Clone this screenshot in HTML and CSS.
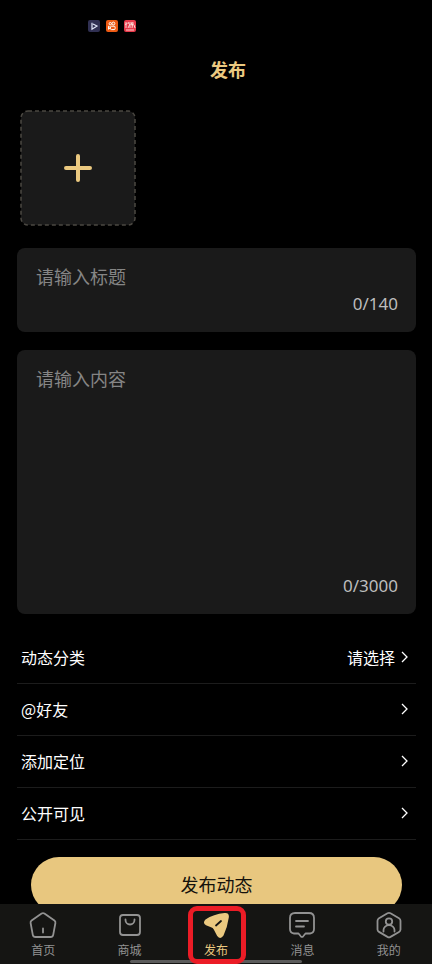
FILE: index.html
```html
<!DOCTYPE html>
<html lang="zh-CN">
<head>
<meta charset="utf-8">
<meta name="viewport" content="width=device-width, initial-scale=1">
<title>发布</title>
<link rel="stylesheet" href="styles.css">
</head>
<body>
<div class="status" aria-hidden="true">
  <svg class="app" viewBox="0 0 12 12"><rect width="12" height="12" rx="2" fill="#303052"/><path d="M4 2.8v6.4l5-3.2-4-2" fill="none" stroke="#dfe4f6" stroke-width="1.2"/></svg>
  <svg class="app" viewBox="0 0 12 12"><rect width="12" height="12" rx="2" fill="#ee5a13"/><g fill="none" stroke="#fff"><circle cx="4.3" cy="3.7" r="1.2"/><circle cx="7.4" cy="3.5" r="1.4"/><rect x="4.5" y="6.2" width="4.6" height="3.4" rx="1"/><path d="M2.5 6.2l2 1.6-2 1.5z"/></g></svg>
  <svg class="app" viewBox="0 0 12 12"><rect width="12" height="12" rx="2" fill="#e8394a"/><path d="M2 2v6M1 4.500l2.500-1M4 2l1 2M4 8l2-4M6 2v6M8 2l-1 3 3-1M9 2l-1 6M10 5l1 3M2 10h8" fill="none" stroke="#fde3df" stroke-width=".9"/></svg>
</div>
<header class="header"><h1 class="title">发布</h1></header>
<main class="main">
  <button class="upload" type="button" aria-label="+">
    <svg class="frame" viewBox="0 0 116 116"><rect x="1" y="1" width="114" height="114" rx="7" fill="#1a1a1a" stroke="#4b4842" stroke-width="1.500" stroke-dasharray="4 3"/><path d="M58 46v24M46 58h24" stroke="#ebc980" stroke-width="4" stroke-linecap="round"/></svg>
  </button>
  <label class="field">
    <input class="entry" type="text" maxlength="140" placeholder="请输入标题">
    <span class="count">0/140</span>
  </label>
  <label class="field field-tall">
    <textarea class="entry" maxlength="3000" placeholder="请输入内容"></textarea>
    <span class="count">0/3000</span>
  </label>
  <div class="options">
    <button class="option" type="button"><span class="name">动态分类</span><span>请选择</span><svg class="chevron" viewBox="0 0 8 12"><path d="M2 1l5 5-5 5"/></svg></button>
    <button class="option" type="button"><span class="name">@好友</span><svg class="chevron" viewBox="0 0 8 12"><path d="M2 1l5 5-5 5"/></svg></button>
    <button class="option" type="button"><span class="name">添加定位</span><svg class="chevron" viewBox="0 0 8 12"><path d="M2 1l5 5-5 5"/></svg></button>
    <button class="option" type="button"><span class="name">公开可见</span><svg class="chevron" viewBox="0 0 8 12"><path d="M2 1l5 5-5 5"/></svg></button>
  </div>
  <button class="submit" type="button">发布动态</button>
</main>
<nav class="tabs">
  <a class="tab" href="#home">
    <svg class="icon" viewBox="0 0 28 28"><path d="M12.600 2.500q1.400-.9 2.800 0l10 7q1.300 1 1 2.500l-2.200 11.800q-.4 2.200-2.600 2.200H6.400q-2.200 0-2.600-2.200L1.600 12q-.3-1.500 1-2.500zM14 17.500v4"/></svg>
    <span>首页</span>
  </a>
  <a class="tab" href="#shop">
    <svg class="icon" viewBox="0 0 28 28"><rect x="4" y="4" width="20" height="20" rx="3"/><path d="M9.500 8.500v.5a4.500 4.500 0 0 0 9 0v-.5"/></svg>
    <span>商城</span>
  </a>
  <a class="tab tab-active" href="#publish" aria-current="page">
    <svg class="icon" viewBox="0 0 28 28"><path class="plane" d="M22.500 2Q27.500 1.500 26.800 6.500Q25.500 16 21.500 24.500Q18.500 29 15.200 25L11.800 18.500Q11 16.800 9 16.200L4 14.300Q.2 11.800 3.500 8.500Q11.500 3.200 22.500 2Z"/><path class="fold" d="M14 14.500l5-4.500"/></svg>
    <span>发布</span>
  </a>
  <a class="tab" href="#messages">
    <svg class="icon" viewBox="0 0 28 28"><path d="M7 2h14q5 0 5 5v11q0 4-4 4.500h-4.500l-2.300 2.800q-1.200 1.200-2.400 0l-2.300-2.800H6Q2 22 2 18V7q0-5 5-5zM8 10h12M8 15.500h8"/></svg>
    <span>消息</span>
  </a>
  <a class="tab" href="#me">
    <svg class="icon" viewBox="0 0 28 28"><path d="M12.500 2.300q1.500-.8 3 0l8.500 5q1.500.9 1.500 2.500v8.600q0 1.600-1.500 2.500l-8.500 5q-1.500.8-3 0l-8.500-5q-1.500-.9-1.500-2.500V9.800q0-1.600 1.500-2.500zM8.500 20.500v-1.400a5.500 5 0 0 1 11 0v1.400"/><circle cx="14" cy="10.500" r="3.200"/></svg>
    <span>我的</span>
  </a>
</nav>
</body>
</html>
```
FILE: styles.css
```css
* {
  box-sizing: border-box;
}

body {
  display: flex;
  flex-direction: column;
  height: 100vh;
  margin: 0;
  background: #000;
  color: #fff;
  font: 16px/24px "Noto Sans CJK SC", sans-serif;
}

button,
input,
textarea {
  margin: 0;
  padding: 0;
  border: 0;
  background: none;
  color: inherit;
  font: inherit;
}

.status {
  display: flex;
  gap: 6px;
  padding: 20px 88px 0;
}

.app {
  width: 12px;
  height: 12px;
}

.header {
  padding: 24px 0 28px 24px;
}

.title {
  margin: 0;
  color: #ebc980;
  font-size: 18px;
  line-height: 26px;
  text-align: center;
}

.main {
  flex: 1;
  min-height: 0;
  padding: 0 16px 0 17px;
  overflow-y: auto;
  scrollbar-width: none;
}

.upload {
  display: block;
  margin: 0 3px 22px;
}

.frame {
  display: block;
  width: 116px;
  height: 116px;
}

.field {
  display: flex;
  flex-direction: column;
  min-height: 84px;
  margin-bottom: 18px;
  padding: 15px 18px 16px 19px;
  border-radius: 8px;
  background: #1a1a1a;
}

.field-tall {
  min-height: 264px;
}

.entry {
  flex: 1;
  width: 100%;
  font-size: 18px;
  line-height: 26px;
  outline: none;
  resize: none;
}

.entry::placeholder {
  color: #858585;
}

input.entry {
  flex: none;
  height: 26px;
}

.count {
  align-self: flex-end;
  margin-top: auto;
  color: #bdbdbd;
  font-family: "Noto Sans", sans-serif;
  font-size: 17px;
}

.option {
  display: flex;
  align-items: center;
  gap: 5px;
  width: 100%;
  height: 52px;
  padding: 0 8px 2px 4px;
  border-bottom: 1px solid #1c1c1c;
  text-align: left;
}

.name {
  flex: 1;
}

.chevron {
  width: 8px;
  height: 12px;
  fill: none;
  stroke: #fff;
  stroke-width: 1.3;
}

.submit {
  display: block;
  width: calc(100% - 28px);
  height: 56px;
  margin: 17px 14px 0;
  padding-bottom: 2px;
  border-radius: 28px;
  background: #e8c77f;
  color: #15120c;
  font-size: 18px;
}

.tabs {
  position: relative;
  display: flex;
  height: 60px;
  background: #151513;
}

.tabs::before {
  content: "";
  position: absolute;
  bottom: 1px;
  left: 30%;
  width: 40%;
  height: 3px;
  border-radius: 2px;
  background: #5c5c5c;
}

.tab {
  position: relative;
  display: flex;
  flex: 1;
  flex-direction: column;
  align-items: center;
  gap: 2px;
  padding-top: 7px;
  color: #929292;
  font-size: 12px;
  line-height: 18px;
  text-decoration: none;
}

.tab-active {
  color: #ebc980;
}

.tab-active::after {
  content: "";
  position: absolute;
  inset: 2px 13px 0 15px;
  border: 5px solid #eb1c26;
  border-radius: 9px;
}

.icon {
  width: 28px;
  height: 28px;
  fill: none;
  stroke: currentColor;
  stroke-width: 1.8;
  stroke-linecap: round;
  stroke-linejoin: round;
}

.plane {
  fill: currentColor;
  stroke: none;
}

.fold {
  stroke: #151513;
}
```
